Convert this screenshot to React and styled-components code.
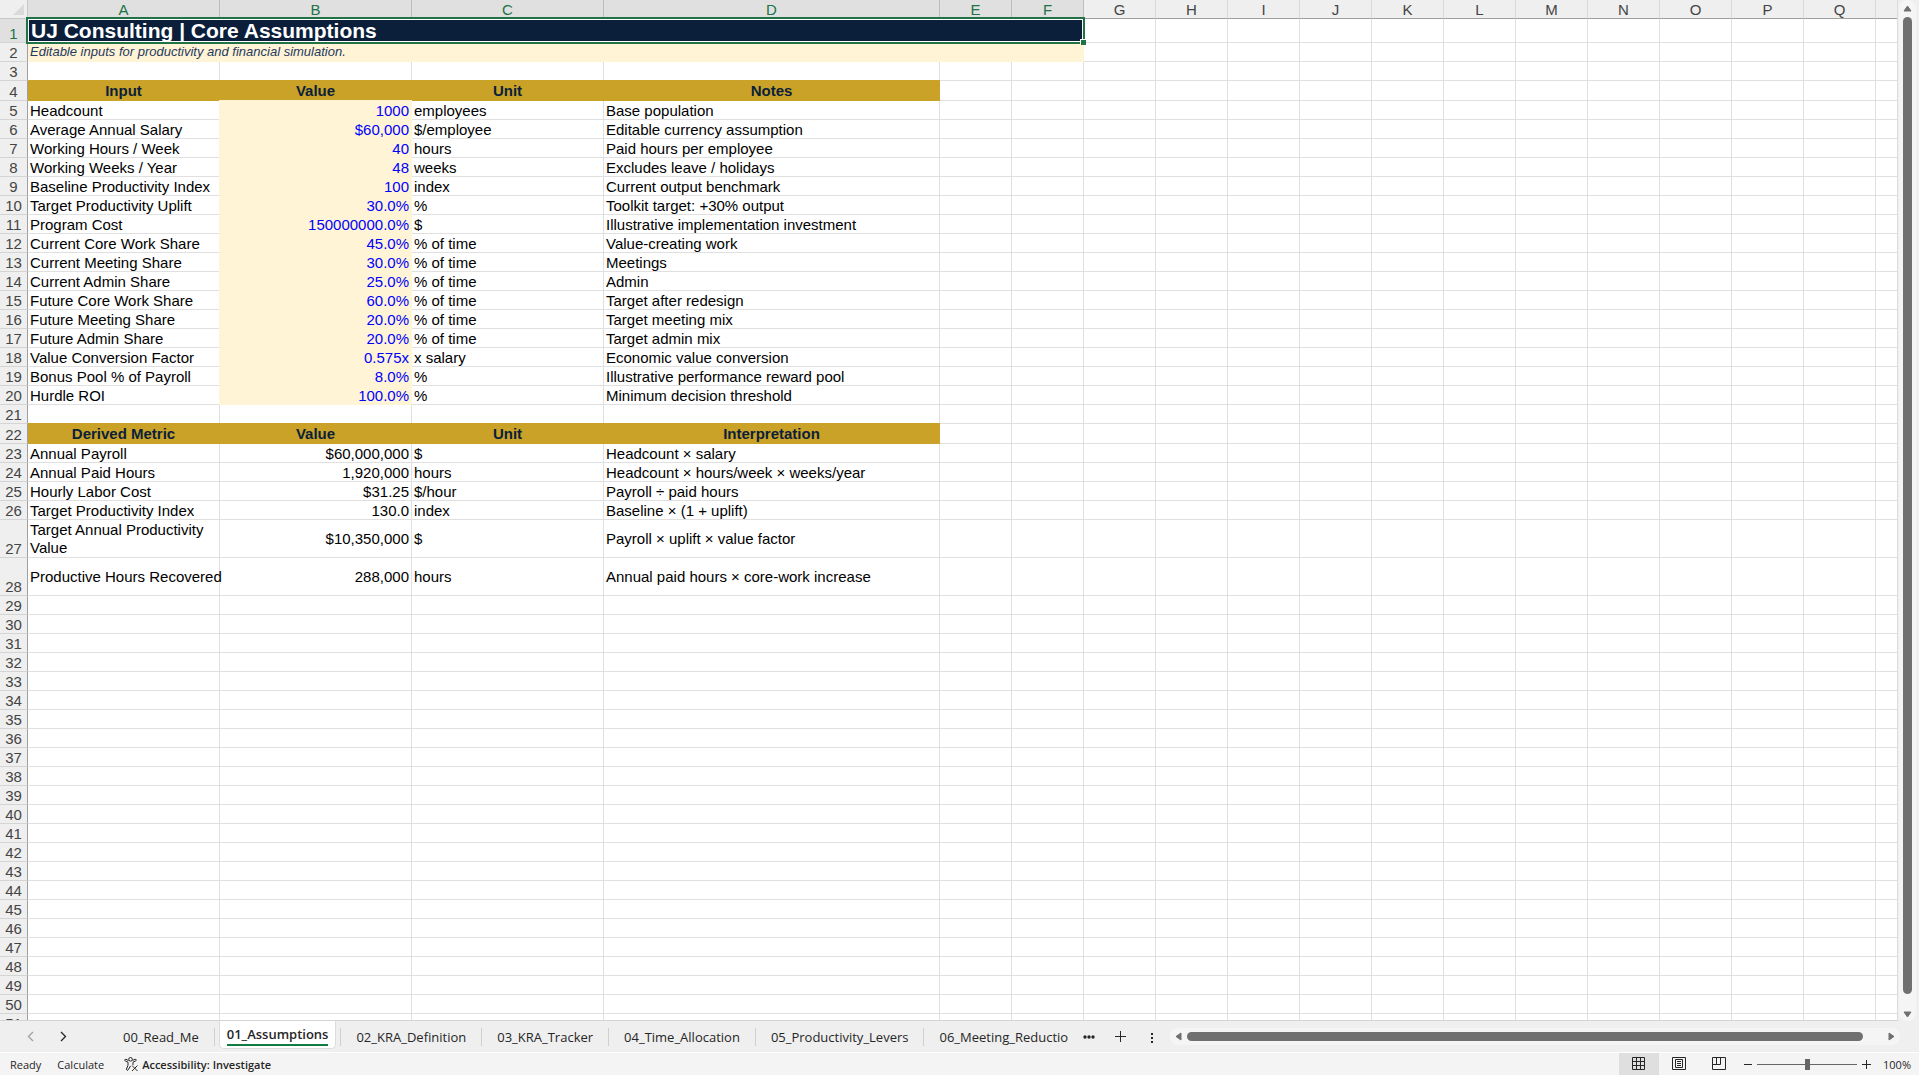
import styled, { createGlobalStyle } from "styled-components";

const GlobalStyle = createGlobalStyle`
  * {
    box-sizing: border-box;
  }
  body {
    margin: 0;
    background: #fff;
    overflow: hidden;
  }
  button {
    border: 0;
    padding: 0;
    background: transparent;
    font: inherit;
    color: inherit;
    cursor: pointer;
  }
`;

const Window = styled.div`
  display: flex;
  flex-direction: column;
  height: 100vh;
  background: #efefef;
  color: #262626;
  font-family: "Open Sans", "Noto Sans", sans-serif;
`;

const Workspace = styled.main`
  display: flex;
  flex: 1;
  min-height: 0;
`;

const SheetView = styled.div`
  flex: 1;
  min-width: 0;
  overflow: hidden;
  background: #fff;
  border-right: 1px solid #dcdcdc;
  border-bottom: 1px solid #d4d4d4;
`;

/* the columns set the real width, zero keeps the fixed layout on */
const Sheet = styled.table`
  width: 0;
  table-layout: fixed;
  border-collapse: separate;
  border-spacing: 0;
  font-family: "Liberation Sans", Arial, sans-serif;
  font-size: 15px;
  line-height: 16px;
  color: #000;
`;

const Column = styled.col`
  width: ${(props) => props.$width}px;
`;

const Row = styled.tr`
  height: ${(props) => props.$height}px;
`;

const Corner = styled.td`
  padding: 0;
  background: #efefef;
  border-right: 1px solid #c6c6c6;
  border-bottom: 1px solid #c6c6c6;
  svg {
    display: block;
    margin: 1px 0 0 13px;
  }
`;

const ColumnHead = styled.th`
  padding: 2px 0 0;
  font-weight: 400;
  color: ${(props) => (props.$selected ? "#217346" : "#444")};
  background: ${(props) => (props.$selected ? "#e0e0e0" : "#efefef")};
  border-right: 1px solid ${(props) => (props.$selected ? "#bdbdbd" : "#d9d9d9")};
  border-bottom: 1px solid #9f9f9f;
`;

const RowHead = styled.th`
  padding: 0;
  font-weight: 400;
  text-align: center;
  vertical-align: bottom;
  color: ${(props) => (props.$selected ? "#217346" : "#444")};
  background: ${(props) => (props.$selected ? "#e0e0e0" : "#efefef")};
  border-right: 1px solid #9f9f9f;
  border-bottom: 1px solid #d4d4d4;
`;

const Cell = styled.td`
  padding: ${(props) => (props.$tall ? "0 2px" : "2px 2px 0")};
  line-height: ${(props) => (props.$tall ? "18px" : "16px")};
  white-space: pre;
  vertical-align: middle;
  text-align: ${(props) => props.$align || "left"};
  border-right: 1px solid #e0e0e0;
  border-bottom: 1px solid #e0e0e0;
`;

const HeadingCell = styled(Cell)`
  padding: 0 2px;
  line-height: 18px;
  font-weight: 700;
  text-align: center;
  color: #0b1f3a;
  background: #c9a227;
  border-color: #c9a227;
  box-shadow: 0 -1px 0 #c9a227;
`;

const InputCell = styled(Cell)`
  color: #00f;
  background: #fff4d6;
  border-color: #fff4d6;
  box-shadow: -1px -1px 0 #fff4d6, 0 -1px 0 #fff4d6, -1px 0 0 #fff4d6;
`;

const TitleCell = styled.td`
  position: relative;
  padding: 0 3px;
  font-size: 21px;
  font-weight: 700;
  line-height: 22px;
  color: #fff;
  background: #0b1f3a;
`;

const SubtitleCell = styled.td`
  padding: 0 2px;
  vertical-align: top;
  font-size: 13px;
  font-style: italic;
  line-height: 18px;
  color: #1f3a5f;
  background: #fff4d6;
`;

const Selection = styled.div`
  position: absolute;
  inset: -2px -1px -1px -2px;
  border: 2px solid #217346;
  box-shadow: inset 0 0 0 1px #fff;
  pointer-events: none;
`;

const FillHandle = styled.div`
  position: absolute;
  right: -3px;
  bottom: -3px;
  width: 6px;
  height: 6px;
  background: #217346;
  border-top: 1px solid #fff;
  border-left: 1px solid #fff;
`;

const VerticalBar = styled.div`
  display: flex;
  flex-direction: column;
  align-items: center;
  width: 17px;
  margin: 0 3px 0 1px;
  padding: 5px 0 3px;
  gap: 5px;
  border-radius: 8px;
  background: #f5f5f5;
`;

const HorizontalBar = styled.div`
  display: flex;
  align-items: center;
  flex: 1;
  height: 17px;
  padding: 0 5px;
  gap: 5px;
  border-radius: 8px;
  background: #f5f5f5;
`;

const ArrowButton = styled.button`
  display: flex;
  flex: none;
`;

const Track = styled.div`
  display: flex;
  flex: 1;
  flex-direction: ${(props) => (props.$vertical ? "column" : "row")};
  padding: ${(props) => (props.$vertical ? "0 0 12px" : "0 20px 0 0")};
`;

const Thumb = styled.div`
  flex: 1;
  min-width: 9px;
  min-height: 9px;
  border-radius: 5px;
  background: #707070;
`;

const TabBar = styled.nav`
  display: flex;
  align-items: center;
  height: 32px;
  padding-right: 19px;
  border-bottom: 1px solid #fff;
  font-size: 13px;
`;

const TabScroll = styled.div`
  display: flex;
  gap: 26px;
  width: 108px;
  padding-left: 27px;
`;

const IconButton = styled.button`
  display: flex;
  color: ${(props) => (props.$muted ? "#a0a0a0" : "#262626")};
`;

const Tabs = styled.div`
  display: flex;
  align-items: center;
  height: 32px;
`;

const ActiveTab = styled.button`
  align-self: flex-start;
  height: 28px;
  margin: 0 4px;
  padding: 0 7px;
  font-weight: 600;
  white-space: nowrap;
  background: #fff;
  border: 1px solid #dcdcdc;
  border-top: 0;
  border-radius: 0 0 5px 5px;
  span {
    display: block;
    margin-bottom: 3px;
    padding-top: 4px;
    line-height: 19px;
    border-bottom: 2px solid #107c41;
  }
`;

const Tab = styled.button`
  height: 18px;
  padding: 0 15px;
  line-height: 18px;
  white-space: nowrap;
  border-right: 1px solid #cfcfcf;
  ${ActiveTab} + & {
    border-left: 1px solid #cfcfcf;
  }
  &:last-child {
    border-right: 0;
  }
`;

const TabTools = styled.div`
  display: flex;
  align-items: center;
  gap: 20px;
  padding-right: 12px;
`;

const StatusBar = styled.footer`
  display: flex;
  align-items: center;
  justify-content: space-between;
  height: 22px;
  background: #f4f4f4;
  font-size: 11px;
`;

const StatusGroup = styled.div`
  display: flex;
  align-items: center;
  gap: 16px;
  padding-left: 10px;
`;

const AccessibilityButton = styled.button`
  display: flex;
  align-items: center;
  gap: 3px;
  margin-left: 4px;
  font-weight: 600;
`;

const ViewGroup = styled.div`
  display: flex;
  align-items: center;
  height: 22px;
`;

const ViewButton = styled.button`
  display: flex;
  align-items: center;
  justify-content: center;
  width: 40px;
  height: 22px;
  background: ${(props) => (props.$active ? "#dfdfdf" : "transparent")};
`;

const ZoomGroup = styled.div`
  display: flex;
  align-items: center;
  gap: 5px;
  padding: 0 8px 0 5px;
`;

const ZoomSlider = styled.input`
  appearance: none;
  width: 100px;
  height: 12px;
  margin: 0;
  background: linear-gradient(#666, #666) center / 100% 1px no-repeat;
  &::-webkit-slider-thumb {
    appearance: none;
    width: 5px;
    height: 11px;
    background: #666;
  }
`;

const ZoomLevel = styled.button`
  margin-left: 7px;
`;

const columns = [
  { name: "A", width: 192 },
  { name: "B", width: 192 },
  { name: "C", width: 192 },
  { name: "D", width: 336 },
  ..."EFGHIJKLMNOPQR".split("").map((name) => ({ name, width: 72 })),
];

const rows = {
  4: { heading: ["Input", "Value", "Unit", "Notes"], height: 20 },
  5: { input: ["Headcount", "1000", "employees", "Base population"] },
  6: { input: ["Average Annual Salary", "$60,000", "$/employee", "Editable currency assumption"] },
  7: { input: ["Working Hours / Week", "40", "hours", "Paid hours per employee"] },
  8: { input: ["Working Weeks / Year", "48", "weeks", "Excludes leave / holidays"] },
  9: { input: ["Baseline Productivity Index", "100", "index", "Current output benchmark"] },
  10: { input: ["Target Productivity Uplift", "30.0%", "%", "Toolkit target: +30% output"] },
  11: { input: ["Program Cost", "150000000.0%", "$", "Illustrative implementation investment"] },
  12: { input: ["Current Core Work Share", "45.0%", "% of time", "Value-creating work"] },
  13: { input: ["Current Meeting Share", "30.0%", "% of time", "Meetings"] },
  14: { input: ["Current Admin Share", "25.0%", "% of time", "Admin"] },
  15: { input: ["Future Core Work Share", "60.0%", "% of time", "Target after redesign"] },
  16: { input: ["Future Meeting Share", "20.0%", "% of time", "Target meeting mix"] },
  17: { input: ["Future Admin Share", "20.0%", "% of time", "Target admin mix"] },
  18: { input: ["Value Conversion Factor", "0.575x", "x salary", "Economic value conversion"] },
  19: { input: ["Bonus Pool % of Payroll", "8.0%", "%", "Illustrative performance reward pool"] },
  20: { input: ["Hurdle ROI", "100.0%", "%", "Minimum decision threshold"] },
  22: { heading: ["Derived Metric", "Value", "Unit", "Interpretation"], height: 20 },
  23: { metric: ["Annual Payroll", "$60,000,000", "$", "Headcount × salary"] },
  24: { metric: ["Annual Paid Hours", "1,920,000", "hours", "Headcount × hours/week × weeks/year"] },
  25: { metric: ["Hourly Labor Cost", "$31.25", "$/hour", "Payroll ÷ paid hours"] },
  26: { metric: ["Target Productivity Index", "130.0", "index", "Baseline × (1 + uplift)"] },
  27: {
    metric: ["Target Annual Productivity\nValue", "$10,350,000", "$", "Payroll × uplift × value factor"],
    height: 38,
  },
  28: {
    metric: ["Productive Hours Recovered", "288,000", "hours", "Annual paid hours × core-work increase"],
    height: 38,
  },
};

const tabs = [
  "00_Read_Me",
  "01_Assumptions",
  "02_KRA_Definition",
  "03_KRA_Tracker",
  "04_Time_Allocation",
  "05_Productivity_Levers",
  "06_Meeting_Reductio",
];

const Arrow = ({ points, width, height }) => (
  <svg width={width} height={height} viewBox={`0 0 ${width} ${height}`}>
    <polygon points={points} fill="#707070" stroke="#707070" strokeLinejoin="round" />
  </svg>
);

const Chevron = ({ d }) => (
  <svg width="7" height="11" viewBox="0 0 7 11" fill="none" stroke="currentColor" strokeWidth="1.3">
    <path d={d} />
  </svg>
);

const renderCells = (number) => {
  const row = rows[number] || {};
  const texts = row.heading || row.input || row.metric || [];
  return columns.map((column, index) => {
    const text = texts[index];
    if (row.heading && text) {
      return <HeadingCell key={column.name}>{text}</HeadingCell>;
    }
    if (row.input && index === 1) {
      return (
        <InputCell key={column.name} $align="right">
          {text}
        </InputCell>
      );
    }
    return (
      <Cell key={column.name} $align={index === 1 ? "right" : "left"} $tall={row.height > 20}>
        {text}
      </Cell>
    );
  });
};

const Grid = () => (
  <Sheet>
    <colgroup>
      <Column $width={28} />
      {columns.map((column) => (
        <Column key={column.name} $width={column.width} />
      ))}
    </colgroup>
    <thead>
      <Row $height={19}>
        <Corner>
          <svg width="12" height="12" viewBox="0 0 12 12">
            <path d="M11 0v11H0z" fill="#dadada" />
          </svg>
        </Corner>
        {columns.map((column, index) => (
          <ColumnHead key={column.name} scope="col" $selected={index < 6}>
            {column.name}
          </ColumnHead>
        ))}
      </Row>
    </thead>
    <tbody>
      <Row $height={24}>
        <RowHead scope="row" $selected>
          1
        </RowHead>
        <TitleCell colSpan={6}>
          UJ Consulting | Core Assumptions
          <Selection>
            <FillHandle />
          </Selection>
        </TitleCell>
        {columns.slice(6).map((column) => (
          <Cell key={column.name} />
        ))}
      </Row>
      <Row $height={19}>
        <RowHead scope="row">2</RowHead>
        <SubtitleCell colSpan={6}>Editable inputs for productivity and financial simulation.</SubtitleCell>
        {columns.slice(6).map((column) => (
          <Cell key={column.name} />
        ))}
      </Row>
      {Array.from({ length: 49 }, (_, index) => index + 3).map((number) => (
        <Row key={number} $height={rows[number]?.height || 19}>
          <RowHead scope="row">{number}</RowHead>
          {renderCells(number)}
        </Row>
      ))}
    </tbody>
  </Sheet>
);

const SheetTabs = () => (
  <TabBar>
    <TabScroll>
      <IconButton aria-label="Previous sheet" $muted>
        <Chevron d="M6 1 1.5 5.5 6 10" />
      </IconButton>
      <IconButton aria-label="Next sheet">
        <Chevron d="M1 1 5.5 5.5 1 10" />
      </IconButton>
    </TabScroll>
    <Tabs>
      {tabs.map((name) =>
        name === "01_Assumptions" ? (
          <ActiveTab key={name}>
            <span>{name}</span>
          </ActiveTab>
        ) : (
          <Tab key={name}>{name}</Tab>
        )
      )}
    </Tabs>
    <TabTools>
      <IconButton aria-label="More sheets">
        <svg width="12" height="4" viewBox="0 0 12 4" fill="currentColor">
          <circle cx="2" cy="2" r="1.7" />
          <circle cx="6" cy="2" r="1.7" />
          <circle cx="10" cy="2" r="1.7" />
        </svg>
      </IconButton>
      <IconButton aria-label="New sheet">
        <svg width="11" height="11" viewBox="0 0 11 11" stroke="currentColor">
          <path d="M5.5 0v11M0 5.5h11" />
        </svg>
      </IconButton>
      <IconButton aria-label="Resize tab bar">
        <svg width="12" height="12" viewBox="0 0 12 12" fill="currentColor">
          <path d="M5 2h2v2H5zM5 6h2v2H5zM5 10h2v2H5z" />
        </svg>
      </IconButton>
    </TabTools>
    <HorizontalBar>
      <ArrowButton aria-label="Scroll left">
        <Arrow width={7} height={9} points="1,4.5 6,1 6,8" />
      </ArrowButton>
      <Track>
        <Thumb />
      </Track>
      <ArrowButton aria-label="Scroll right">
        <Arrow width={7} height={9} points="6,4.5 1,1 1,8" />
      </ArrowButton>
    </HorizontalBar>
  </TabBar>
);

const Status = () => (
  <StatusBar>
    <StatusGroup>
      <span>Ready</span>
      <span>Calculate</span>
      <AccessibilityButton>
        <svg width="15" height="15" viewBox="0 0 15 15" fill="none" stroke="#262626">
          <circle cx="6.5" cy="2.3" r="1.8" />
          <path d="M4.5 3.5 2 2.3C.8 1.9.3 3.4 1.2 3.9L4 5.2v3L2.5 12c-.3 1.2 1.1 1.8 1.7.8L6.5 9" />
          <path d="M8.5 3.5 11 2.3c1.2-.4 1.7 1.1.8 1.6L9 5.2V8" />
          <path d="m8 8.5 5.5 5.5M13.5 8.5 8 14" />
        </svg>
        Accessibility: Investigate
      </AccessibilityButton>
    </StatusGroup>
    <ViewGroup>
      <ViewButton aria-label="Normal view" $active>
        <svg width="14" height="14" viewBox="0 0 14 14" fill="none" stroke="#262626">
          <path d="M.5.5h12v12H.5zM4.5.5v12M8.5.5v12M.5 4.5h12M.5 8.5h12" />
        </svg>
      </ViewButton>
      <ViewButton aria-label="Page layout">
        <svg width="14" height="14" viewBox="0 0 14 14" fill="none" stroke="#262626">
          <path d="M.5.5h13v12H.5zM3.5 2.5h7v8h-7zM5 4.5h4M5 6.5h4M5 8.5h4" />
        </svg>
      </ViewButton>
      <ViewButton aria-label="Page break preview">
        <svg width="14" height="14" viewBox="0 0 14 14" fill="none" stroke="#262626">
          <path d="M.5.5h13v12H.5zM.5 7.5h8v-7M4.5.5v7" />
        </svg>
      </ViewButton>
      <ZoomGroup>
        <IconButton aria-label="Zoom out">
          <svg width="8" height="9" viewBox="0 0 8 9" stroke="currentColor">
            <path d="M0 4.5h8" />
          </svg>
        </IconButton>
        <ZoomSlider type="range" aria-label="Zoom" min="0" max="200" defaultValue="100" />
        <IconButton aria-label="Zoom in">
          <svg width="9" height="9" viewBox="0 0 9 9" stroke="currentColor">
            <path d="M0 4.5h9M4.5 0v9" />
          </svg>
        </IconButton>
        <ZoomLevel>100%</ZoomLevel>
      </ZoomGroup>
    </ViewGroup>
  </StatusBar>
);

const App = () => {
  return (
    <>
      <GlobalStyle />
      <Window>
        <Workspace>
          <SheetView>
            <Grid />
          </SheetView>
          <VerticalBar>
            <ArrowButton aria-label="Scroll up">
              <Arrow width={9} height={7} points="4.5,1 1,6 8,6" />
            </ArrowButton>
            <Track $vertical>
              <Thumb />
            </Track>
            <ArrowButton aria-label="Scroll down">
              <Arrow width={9} height={7} points="4.5,6 1,1 8,1" />
            </ArrowButton>
          </VerticalBar>
        </Workspace>
        <SheetTabs />
        <Status />
      </Window>
    </>
  );
};

export default App;
